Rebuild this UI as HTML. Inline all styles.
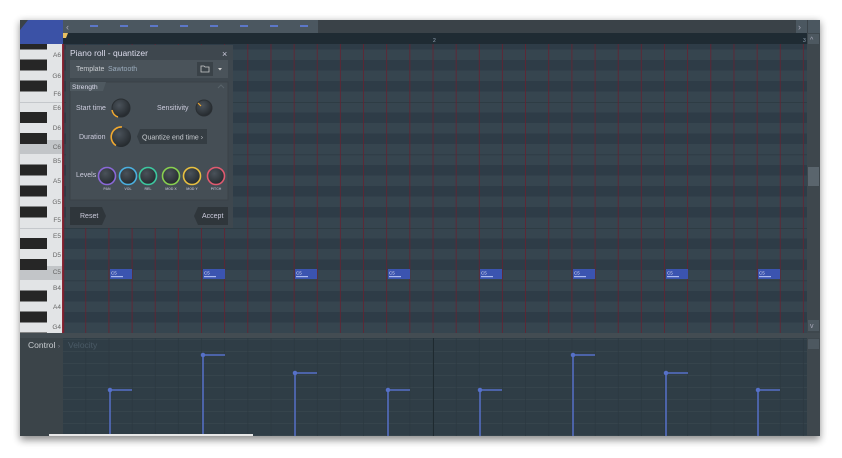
<!DOCTYPE html>
<html><head><meta charset="utf-8"><style>
body{margin:0;width:842px;height:458px;background:#fff;overflow:hidden;font-family:"Liberation Sans",sans-serif}
svg{position:absolute;left:0;top:0}
</style></head><body>
<svg width="842" height="458" viewBox="0 0 842 458" xmlns="http://www.w3.org/2000/svg" font-family="Liberation Sans, sans-serif">
<defs>
<filter id="sh" x="-5%" y="-5%" width="110%" height="115%"><feGaussianBlur stdDeviation="4"/></filter>
<radialGradient id="kn" cx="40%" cy="35%" r="70%"><stop offset="0" stop-color="#4a525a"/><stop offset="1" stop-color="#23282c"/></radialGradient>
<pattern id="rows" x="0" y="49.5" width="800" height="126" patternUnits="userSpaceOnUse">
<rect width="800" height="126" fill="#36454f"/>
<rect y="10.5" width="800" height="10.5" fill="#2e3c47"/>
<rect y="31.5" width="800" height="10.5" fill="#2e3c47"/>
<rect y="63" width="800" height="10.5" fill="#2e3c47"/>
<rect y="84" width="800" height="10.5" fill="#2e3c47"/>
<rect y="115.5" width="800" height="10.5" fill="#2e3c47"/>
<rect y="52.5" width="800" height="0.7" fill="#2a3740"/>
<rect y="105" width="800" height="0.7" fill="#2a3740"/>
</pattern>
<pattern id="vl" x="63" y="0" width="23.15" height="500" patternUnits="userSpaceOnUse">
<rect x="22.4" width="1.5" height="500" fill="#6a1f2e"/>
</pattern>
<pattern id="cl" x="63" y="0" width="23.15" height="500" patternUnits="userSpaceOnUse">
<rect x="22.5" width="0.8" height="500" fill="#2b373f"/>
</pattern>
<pattern id="ch" x="0" y="340" width="800" height="12" patternUnits="userSpaceOnUse">
<rect y="11.4" width="800" height="0.6" fill="#3a4850"/>
</pattern>
<pattern id="keys" x="20" y="49.5" width="50" height="126" patternUnits="userSpaceOnUse">
<rect x="0" y="10" width="27" height="11" fill="#262626"/>
<rect x="0" y="31" width="27" height="11" fill="#262626"/>
<rect x="0" y="62.5" width="27" height="11" fill="#262626"/>
<rect x="0" y="83.5" width="27" height="11" fill="#262626"/>
<rect x="0" y="115" width="27" height="11" fill="#262626"/>
<rect x="0" y="52.5" width="50" height="0.7" fill="#b8bcc0"/>
<rect x="0" y="126" width="50" height="0.7" fill="#b8bcc0"/>
</pattern>
</defs>
<rect x="20" y="22" width="800" height="418" fill="#000" opacity="0.45" filter="url(#sh)"/>
<rect x="20" y="20" width="800" height="416" fill="#3a4248"/>
<!-- top bar -->
<rect x="63" y="20" width="255" height="13" fill="#4b5760"/>
<text x="66" y="30" font-size="9" fill="#aab">‹</text>
<g fill="#5c77c8">
<rect x="90" y="25" width="8" height="2"/><rect x="120" y="25" width="8" height="2"/><rect x="150" y="25" width="8" height="2"/><rect x="180" y="25" width="8" height="2"/><rect x="210" y="25" width="8" height="2"/><rect x="240" y="25" width="8" height="2"/><rect x="270" y="25" width="8" height="2"/><rect x="300" y="25" width="8" height="2"/>
</g>
<rect x="796" y="20" width="11" height="13" fill="#4b5760"/><text x="798" y="30" font-size="9" fill="#aab">›</text>
<rect x="808" y="20" width="12" height="13" fill="#4b5760"/>
<rect x="20" y="33" width="800" height="11" fill="#1f2b33"/>
<path d="M28 20 H63 V44 H20 V30 Z" fill="#3b52a6"/>
<path d="M63 33 h5 l-2 5 h-3z" fill="#e8c060"/>
<text x="433" y="42" font-size="5" fill="#9ab">2</text>
<text x="803" y="42" font-size="5" fill="#9ab">3</text>
<!-- grid -->
<rect x="63" y="44" width="744" height="289" fill="url(#rows)"/>
<rect x="63" y="44" width="744" height="289" fill="url(#vl)"/>
<rect x="63" y="44" width="1.2" height="289" fill="#7a2030"/>
<!-- right scrollbar -->
<rect x="807" y="33" width="13" height="303" fill="#3e474d"/>
<rect x="808" y="34" width="11" height="10" fill="#4d5860"/>
<text x="810" y="42" font-size="7" fill="#aab">^</text>
<rect x="808" y="167" width="11" height="19" fill="#5a656d"/>
<rect x="808" y="320" width="11" height="11" fill="#4d5860"/>
<text x="810" y="328" font-size="7" fill="#aab">v</text>
<!-- piano -->
<rect x="20" y="44" width="43" height="289" fill="#e2e4e6"/>
<rect x="20" y="140" width="43" height="14" fill="#c2c5c8"/>
<rect x="20" y="266" width="43" height="14" fill="#c2c5c8"/>
<rect x="20" y="44" width="43" height="289" fill="url(#keys)"/>
<rect x="62" y="44" width="1" height="289" fill="#8a2a36"/>
<g font-size="6.5" fill="#666" text-anchor="end">
<text x="61" y="57">A6</text><text x="61" y="78">G6</text><text x="61" y="96">F6</text><text x="61" y="110">E6</text><text x="61" y="130">D6</text><text x="61" y="149">C6</text><text x="61" y="163">B5</text><text x="61" y="183">A5</text><text x="61" y="204">G5</text><text x="61" y="222">F5</text><text x="61" y="238">E5</text><text x="61" y="257">D5</text><text x="61" y="274">C5</text><text x="61" y="290">B4</text><text x="61" y="309">A4</text><text x="61" y="329">G4</text>
</g>
<!-- notes -->
<g>
<g transform="translate(110,269)"><rect width="22" height="10" fill="#3b54b0"/><rect x="1" y="7" width="12" height="1.2" fill="#aab8ee"/><text x="1" y="5.5" font-size="4.5" fill="#dde">C5</text></g>
<g transform="translate(203,269)"><rect width="22" height="10" fill="#3b54b0"/><rect x="1" y="7" width="12" height="1.2" fill="#aab8ee"/><text x="1" y="5.5" font-size="4.5" fill="#dde">C5</text></g>
<g transform="translate(295,269)"><rect width="22" height="10" fill="#3b54b0"/><rect x="1" y="7" width="12" height="1.2" fill="#aab8ee"/><text x="1" y="5.5" font-size="4.5" fill="#dde">C5</text></g>
<g transform="translate(388,269)"><rect width="22" height="10" fill="#3b54b0"/><rect x="1" y="7" width="12" height="1.2" fill="#aab8ee"/><text x="1" y="5.5" font-size="4.5" fill="#dde">C5</text></g>
<g transform="translate(480,269)"><rect width="22" height="10" fill="#3b54b0"/><rect x="1" y="7" width="12" height="1.2" fill="#aab8ee"/><text x="1" y="5.5" font-size="4.5" fill="#dde">C5</text></g>
<g transform="translate(573,269)"><rect width="22" height="10" fill="#3b54b0"/><rect x="1" y="7" width="12" height="1.2" fill="#aab8ee"/><text x="1" y="5.5" font-size="4.5" fill="#dde">C5</text></g>
<g transform="translate(666,269)"><rect width="22" height="10" fill="#3b54b0"/><rect x="1" y="7" width="12" height="1.2" fill="#aab8ee"/><text x="1" y="5.5" font-size="4.5" fill="#dde">C5</text></g>
<g transform="translate(758,269)"><rect width="22" height="10" fill="#3b54b0"/><rect x="1" y="7" width="12" height="1.2" fill="#aab8ee"/><text x="1" y="5.5" font-size="4.5" fill="#dde">C5</text></g>
</g>
<!-- control area -->
<rect x="20" y="333" width="800" height="5" fill="#434c52"/>
<rect x="20" y="338" width="43" height="98" fill="#3b4449"/>
<rect x="63" y="338" width="744" height="98" fill="#2f3d46"/>
<rect x="63" y="338" width="744" height="98" fill="url(#ch)"/>
<rect x="63" y="338" width="744" height="98" fill="url(#cl)"/>
<rect x="433" y="338" width="1" height="98" fill="#1f2a30"/>
<rect x="807" y="338" width="13" height="98" fill="#3e474d"/>
<rect x="808" y="339" width="11" height="10" fill="#4d5860"/>
<text x="28" y="348" font-size="8.5" fill="#c8ccd0">Control</text>
<text x="58" y="348" font-size="6" fill="#889">›</text>
<text x="68" y="348" font-size="8.5" fill="#4a5a66">Velocity</text>
<g stroke="#5670c8" stroke-width="1.5" fill="#5670c8">
<path d="M110 436V390h22" fill="none"/><circle cx="110" cy="390" r="1.5"/>
<path d="M203 436V355h22" fill="none"/><circle cx="203" cy="355" r="1.5"/>
<path d="M295 436V373h22" fill="none"/><circle cx="295" cy="373" r="1.5"/>
<path d="M388 436V390h22" fill="none"/><circle cx="388" cy="390" r="1.5"/>
<path d="M480 436V390h22" fill="none"/><circle cx="480" cy="390" r="1.5"/>
<path d="M573 436V355h22" fill="none"/><circle cx="573" cy="355" r="1.5"/>
<path d="M666 436V373h22" fill="none"/><circle cx="666" cy="373" r="1.5"/>
<path d="M758 436V390h22" fill="none"/><circle cx="758" cy="390" r="1.5"/>
</g>
<rect x="49" y="434" width="204" height="2" fill="#e8e8e8"/>
<!-- dialog -->
<rect x="66" y="45" width="167" height="183" fill="#3e474e"/>
<text x="70" y="56" font-size="8.5" fill="#dde">Piano roll - quantizer</text>
<text x="222" y="57" font-size="9" fill="#ccd">×</text>
<rect x="70" y="60" width="158" height="18" fill="#4a535a"/>
<text x="76" y="71" font-size="7" fill="#c8ccd0">Template</text>
<text x="108" y="71" font-size="7" fill="#9ab">Sawtooth</text>
<rect x="197" y="62" width="16" height="14" fill="#3a4248"/>
<path d="M201 66h3l1 1h4v5h-8z" fill="none" stroke="#ccc" stroke-width="0.8"/>
<path d="M218 68h4l-2 2.5z" fill="#ccc"/>
<rect x="70" y="82" width="158" height="118" fill="#454e55" stroke="#3a4248"/>
<path d="M70 82h36l-3 9H70z" fill="#4f5960"/>
<text x="72" y="89" font-size="6.8" fill="#dde">Strength</text>
<path d="M218 88l3-3 3 3" fill="none" stroke="#5a646b"/>
<text x="76" y="110" font-size="7" fill="#ccd">Start time</text>
<text x="157" y="110" font-size="7" fill="#ccd">Sensitivity</text>
<text x="79" y="139" font-size="7" fill="#ccd">Duration</text>
<circle cx="121" cy="108" r="9" fill="url(#kn)" stroke="#2a2f33" stroke-width="1"/>
<path d="M112 110 A9 9 0 0 0 118 117" fill="none" stroke="#f0a830" stroke-width="1.5"/>
<circle cx="204" cy="108" r="8" fill="url(#kn)" stroke="#2a2f33" stroke-width="1"/>
<path d="M198 103l3 3" stroke="#f0a830" stroke-width="1.2"/>
<circle cx="121" cy="137" r="10" fill="url(#kn)"/>
<path d="M116 145.5 A10 10 0 0 1 122 127" fill="none" stroke="#f0a830" stroke-width="1.6"/>
<path d="M140 129h67v15h-67l-3-7.5z" fill="#353d43"/>
<text x="142" y="139.5" font-size="7" fill="#c8ccd0">Quantize end time ›</text>
<text x="76" y="177" font-size="7" fill="#ccd">Levels</text>
<g fill="url(#kn)" stroke-width="1.6">
<circle cx="107" cy="176" r="8.5" stroke="#8a68d8"/>
<circle cx="128" cy="176" r="8.5" stroke="#4ab0e0"/>
<circle cx="148" cy="176" r="8.5" stroke="#3cc8a0"/>
<circle cx="171" cy="176" r="8.5" stroke="#88d050"/>
<circle cx="192" cy="176" r="8.5" stroke="#e8c040"/>
<circle cx="216" cy="176" r="8.5" stroke="#e05a70"/>
</g>
<g font-size="3.5" fill="#aab" text-anchor="middle" font-weight="bold">
<text x="107" y="190">PAN</text><text x="128" y="190">VOL</text><text x="148" y="190">REL</text><text x="171" y="190">MOD X</text><text x="192" y="190">MOD Y</text><text x="216" y="190">PITCH</text>
</g>
<path d="M70 207h32l4 9-4 9H70z" fill="#2f363b"/>
<text x="80" y="218" font-size="7" fill="#ccd">Reset</text>
<path d="M228 207h-30l-4 9 4 9h30z" fill="#2f363b"/>
<text x="202" y="218" font-size="7" fill="#ccd">Accept</text>
</svg>
</body></html>
